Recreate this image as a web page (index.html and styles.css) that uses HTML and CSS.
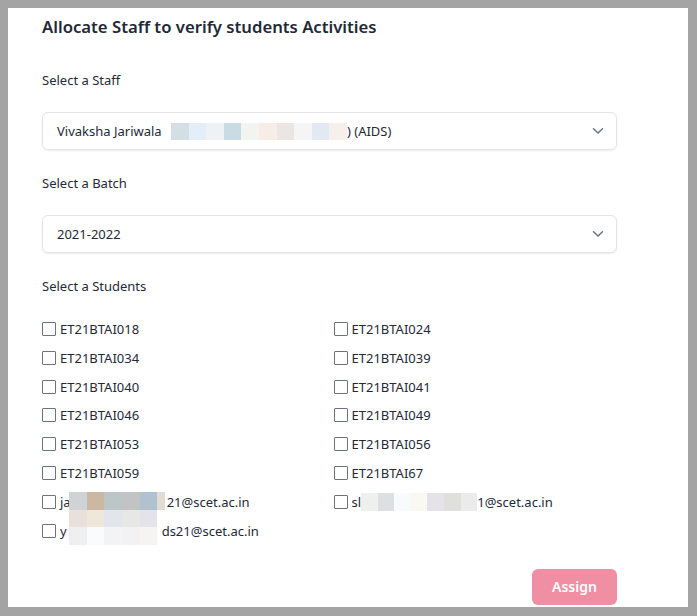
FILE: index.html
```html
<!DOCTYPE html>
<html>
<head>
<meta charset="utf-8">
<link rel="stylesheet" href="styles.css">
</head>
<body>
<div class="panel">
  <h1 class="title">Allocate Staff to verify students Activities</h1>

  <div class="label label-first">Select a Staff</div>
  <div class="select">
    <span class="value">Vivaksha Jariwala <span class="mask mask-staff"><i style="background:#d4dee5"></i><i style="background:#e3eef8"></i><i style="background:#eef2f4"></i><i style="background:#c9dbe5"></i><i style="background:#f2f4f2"></i><i style="background:#f5ede6"></i><i style="background:#ebe6e3"></i><i style="background:#f5f5f5"></i><i style="background:#e3e9f3"></i><i style="background:#f7f0ea"></i></span>) (AIDS)</span>
    <svg class="chev" width="12" height="8" viewBox="0 0 12 8"><path d="M1.5 1.8 L6 6 L10.5 1.8" fill="none" stroke="#6b7280" stroke-width="1.5" stroke-linecap="round" stroke-linejoin="round"/></svg>
  </div>

  <div class="label">Select a Batch</div>
  <div class="select">
    <span class="value">2021-2022</span>
    <svg class="chev" width="12" height="8" viewBox="0 0 12 8"><path d="M1.5 1.8 L6 6 L10.5 1.8" fill="none" stroke="#6b7280" stroke-width="1.5" stroke-linecap="round" stroke-linejoin="round"/></svg>
  </div>

  <div class="label">Select a Students</div>
  <div class="students">
    <label class="item"><input type="checkbox"><span>ET21BTAI018</span></label>
    <label class="item"><input type="checkbox"><span>ET21BTAI024</span></label>
    <label class="item"><input type="checkbox"><span>ET21BTAI034</span></label>
    <label class="item"><input type="checkbox"><span>ET21BTAI039</span></label>
    <label class="item"><input type="checkbox"><span>ET21BTAI040</span></label>
    <label class="item"><input type="checkbox"><span>ET21BTAI041</span></label>
    <label class="item"><input type="checkbox"><span>ET21BTAI046</span></label>
    <label class="item"><input type="checkbox"><span>ET21BTAI049</span></label>
    <label class="item"><input type="checkbox"><span>ET21BTAI053</span></label>
    <label class="item"><input type="checkbox"><span>ET21BTAI056</span></label>
    <label class="item"><input type="checkbox"><span>ET21BTAI059</span></label>
    <label class="item"><input type="checkbox"><span>ET21BTAI67</span></label>
    <label class="item"><input type="checkbox"><span>ja<span class="hole hole-a"><span class="blur3">
      <i style="background:#cfd3d5"></i><i style="background:#cbb8a3"></i><i style="background:#bcc6c7"></i><i style="background:#c2c4c3"></i><i style="background:#b0c2d0"></i><i style="background:#e0ddd5"></i>
      <i style="background:#e8e0da"></i><i style="background:#efe8da"></i><i style="background:#e2e6ec"></i><i style="background:#e7e7e5"></i><i style="background:#e4e3ea"></i><b></b>
      <i style="background:#f0efef"></i><i style="background:#fafbfc"></i><i style="background:#f3f3f5"></i><i style="background:#f2f2f3"></i><i style="background:#f6f3f3"></i><b></b>
    </span></span>21@scet.ac.in</span></label>
    <label class="item"><input type="checkbox"><span>sl<span class="mask mask-sl"><i style="background:#eef0ee"></i><i style="background:#dce0e3"></i><i style="background:#f8fbfc"></i><i style="background:#f9f9f2"></i><i style="background:#e5e3e9"></i><i style="background:#dfe0dc"></i><i style="background:#ebebeb"></i></span>1@scet.ac.in</span></label>
    <label class="item"><input type="checkbox"><span>y<span class="hole hole-y"></span>ds21@scet.ac.in</span></label>
  </div>

  <div class="actions">
    <button class="assign">Assign</button>
  </div>
</div>
</body>
</html>
```

FILE: styles.css
```css
html, body {
  margin: 0;
  padding: 0;
}
body {
  background: #a4a4a4;
  font-family: "Segoe UI", "Noto Sans", "Open Sans", sans-serif;
  color: #1f2937;
}
.panel {
  background: #fff;
  margin: 8px 9px 9px 8px;
  width: 680px;
  height: 599px;
  box-sizing: border-box;
  padding: 5px 71px 0 34px;
}
.title {
  margin: 0;
  font-size: 16.7px;
  line-height: 28px;
  font-weight: 600;
  color: #1f2937;
}
.label {
  font-size: 13px;
  line-height: 20px;
  margin-top: 23px;
  color: #1f2937;
}
.label-first {
  margin-top: 29px;
}
.select {
  margin-top: 22px;
  height: 38px;
  box-sizing: border-box;
  border: 1px solid #e2e4e8;
  border-radius: 6px;
  box-shadow: 0 1px 2px rgba(0,0,0,0.07);
  display: flex;
  align-items: center;
  justify-content: space-between;
  padding: 0 12px 0 14px;
  font-size: 13px;
}
.value {
  display: flex;
  align-items: center;
  white-space: pre;
}
.chev {
  display: block;
}
.mask {
  display: inline-flex;
  height: 17px;
}
.mask i {
  display: block;
  height: 100%;
}
.mask-staff {
  margin-left: 6px;
}
.mask-staff i {
  width: 17.6px;
}
.mask-sl {
  height: 18px;
}
.mask-sl i {
  width: 16.6px;
}
.students {
  margin-top: 23px;
  display: grid;
  grid-template-columns: 1fr 1fr;
  column-gap: 8px;
  row-gap: 8.8px;
}
.item {
  display: flex;
  align-items: center;
  height: 20px;
  font-size: 13px;
}
.item input {
  appearance: none;
  -webkit-appearance: none;
  width: 14px;
  height: 14px;
  margin: 0 4px 0 0;
  border: 1px solid #6b7280;
  border-radius: 1px;
  background: #fff;
  flex: none;
}
.item > span {
  display: flex;
  align-items: center;
  white-space: pre;
}
.hole {
  display: inline-block;
  position: relative;
  height: 17px;
}
.hole-a {
  width: 96px;
}
.hole-y {
  width: 95px;
}
.blur3 {
  position: absolute;
  left: -2px;
  top: -1px;
  display: grid;
  grid-template-columns: 18px 17px 18px 18px 17px 8px;
  grid-template-rows: 18px 17px 18px;
  z-index: 2;
}
.blur3 i, .blur3 b {
  display: block;
}
.actions {
  margin-top: 28px;
  display: flex;
  justify-content: flex-end;
}
.assign {
  width: 85px;
  height: 36px;
  border: none;
  border-radius: 6px;
  background: #f08fa3;
  color: #fff;
  font-family: inherit;
  font-size: 14px;
  font-weight: 600;
}
```
